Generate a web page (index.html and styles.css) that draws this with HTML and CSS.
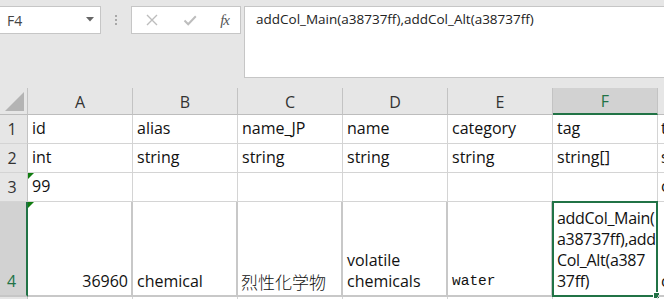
FILE: index.html
```html
<!DOCTYPE html>
<html>
<head>
<meta charset="utf-8">
<link rel="stylesheet" href="styles.css">
</head>
<body>
<div class="app">
  <div class="toolbar">
    <div class="namebox">
      <span class="nb-text">F4</span>
      <svg class="nb-arrow" width="8" height="5" viewBox="0 0 8 5"><path d="M0 0H8L4 4.5Z" fill="#666"/></svg>
    </div>
    <div class="grip"><i></i><i></i><i></i></div>
    <div class="fbtns">
      <svg class="ico" width="14" height="14" viewBox="0 0 14 14"><path d="M2 2L12 12M12 2L2 12" stroke="#bdbdbd" stroke-width="1.4" fill="none"/></svg>
      <svg class="ico" width="14" height="14" viewBox="0 0 14 14"><path d="M1.5 7.5L5.2 11.2L12.8 3.2" stroke="#bdbdbd" stroke-width="2" fill="none"/></svg>
      <span class="fx">fx</span>
    </div>
    <div class="formula">addCol_Main(a38737ff),addCol_Alt(a38737ff)</div>
  </div>
  <div class="sheet">
    <div class="corner"><svg width="19" height="19" viewBox="0 0 19 19"><path d="M19 0V19H0Z" fill="#b4b4b4"/></svg></div>
    <div class="ch">A</div>
    <div class="ch">B</div>
    <div class="ch">C</div>
    <div class="ch">D</div>
    <div class="ch">E</div>
    <div class="ch ch-sel">F</div>
    <div class="ch ch-last"></div>

    <div class="rh">1</div>
    <div class="c">id</div>
    <div class="c">alias</div>
    <div class="c">name_JP</div>
    <div class="c">name</div>
    <div class="c">category</div>
    <div class="c">tag</div>
    <div class="c c-last">tag</div>

    <div class="rh">2</div>
    <div class="c">int</div>
    <div class="c">string</div>
    <div class="c">string</div>
    <div class="c">string</div>
    <div class="c">string</div>
    <div class="c">string[]</div>
    <div class="c c-last">string</div>

    <div class="rh">3</div>
    <div class="c flag">99</div>
    <div class="c"></div>
    <div class="c"></div>
    <div class="c"></div>
    <div class="c"></div>
    <div class="c"></div>
    <div class="c c-last">c</div>

    <div class="rh rh-sel">4</div>
    <div class="c r4 flag num">36960</div>
    <div class="c r4">chemical</div>
    <div class="c r4 jp">烈性化学物</div>
    <div class="c r4 wrap">volatile<br>chemicals</div>
    <div class="c r4 mono">water</div>
    <div class="c r4 wrap active">addCol_Main(<br>a38737ff),add<br>Col_Alt(a387<br>37ff)<span class="handle"></span></div>
    <div class="c r4 c-last">c</div>

    <div class="rh"></div>
    <div class="c"></div>
    <div class="c"></div>
    <div class="c"></div>
    <div class="c"></div>
    <div class="c"></div>
    <div class="c"></div>
    <div class="c c-last"></div>
  </div>
</div>
</body>
</html>
```

FILE: styles.css
```css
* { box-sizing: border-box; }
html, body { margin: 0; padding: 0; }
body {
  width: 664px;
  height: 299px;
  overflow: hidden;
  background: #ffffff;
  font-family: "Open Sans", "Noto Sans", sans-serif;
}
.app { width: 664px; height: 299px; overflow: hidden; }

.toolbar {
  height: 88px;
  background: #e6e6e6;
  display: flex;
  align-items: flex-start;
  padding-top: 6px;
}
.namebox {
  margin-left: -1px;
  width: 102px;
  height: 28px;
  background: #fff;
  border: 1px solid #c6c6c6;
  display: flex;
  align-items: center;
  justify-content: space-between;
  padding: 0 6px 0 7px;
}
.nb-text { font-size: 14px; color: #444; }
.nb-arrow { margin-top: -2px; }
.grip {
  width: 30px;
  height: 28px;
  display: flex;
  flex-direction: column;
  align-items: center;
  justify-content: center;
  gap: 2px;
}
.grip i { display: block; width: 2px; height: 2px; background: #a8a8a8; }
.fbtns {
  width: 110px;
  height: 28px;
  background: #fff;
  border: 1px solid #c6c6c6;
  display: flex;
  align-items: center;
  justify-content: space-between;
  padding: 0 11px 0 13px;
}
.fx {
  font-family: "Liberation Serif", "DejaVu Serif", serif;
  font-style: italic;
  font-size: 15px;
  color: #555;
  letter-spacing: -1px;
}
.formula {
  flex: 1;
  margin-left: 3px;
  margin-right: -1px;
  height: 72px;
  background: #fff;
  border: 1px solid #c6c6c6;
  padding: 3px 0 0 11px;
  font-size: 13.5px;
  color: #222;
  white-space: nowrap;
}

.sheet {
  display: grid;
  grid-template-columns: 28px repeat(6, 105px) 1fr;
  grid-template-rows: 27px 29px 29px 29px 95px 1fr;
  height: 211px;
}
.corner, .ch, .rh {
  background: #e6e6e6;
  border-right: 1px solid #c3c3c3;
  border-bottom: 1px solid #bdbdbd;
  color: #333;
}
.corner { display: flex; align-items: flex-end; justify-content: flex-end; padding: 0 3px 3px 0; }
.ch {
  font-size: 16px;
  display: flex;
  align-items: center;
  justify-content: center;
  padding-top: 1px;
}
.ch-sel {
  background: #d2d2d2;
  color: #217346;
  border-bottom: 2px solid #217346;
}
.ch-last { border-right: none; }
.rh {
  font-size: 16px;
  display: flex;
  align-items: flex-end;
  justify-content: center;
  padding-bottom: 3px;
  padding-right: 3px;
  border-bottom-color: #d4d4d4;
}
.rh-sel {
  background: #d2d2d2;
  color: #217346;
  border-right: 2px solid #217346;
  border-bottom: 2px solid #c6c6c6;
}
.c {
  position: relative;
  border-right: 1px solid #d4d4d4;
  border-bottom: 1px solid #d4d4d4;
  font-size: 16px;
  color: #111;
  display: flex;
  align-items: flex-end;
  padding: 0 3px 4px 4px;
  line-height: 21px;
  white-space: nowrap;
  overflow: hidden;
}
.c-last { border-right: none; padding-left: 3px; }
.r4 {
  border-right: 2px solid #c8c8c8;
  border-bottom: 2px solid #c8c8c8;
  padding-bottom: 3px;
}
.r4.c-last { border-right: none; }
.num { justify-content: flex-end; }
.jp {
  font-family: "Noto Sans CJK JP", sans-serif;
  font-weight: 300;
  font-size: 17px;
  padding-left: 3px;
}
.mono { font-family: "Liberation Mono", monospace; font-size: 14.5px; }
.wrap { white-space: normal; }
.flag::before {
  content: "";
  position: absolute;
  left: 0;
  top: 0;
  border-top: 6px solid #107c10;
  border-right: 6px solid transparent;
}
.active {
  border: 2px solid #217346;
  margin-left: -1px;
  margin-top: -1px;
  overflow: visible;
  padding-left: 3px;
  letter-spacing: -0.3px;
}
.handle {
  position: absolute;
  right: -4px;
  bottom: -4px;
  width: 7px;
  height: 7px;
  background: #217346;
  border: 1px solid #fff;
}
```
